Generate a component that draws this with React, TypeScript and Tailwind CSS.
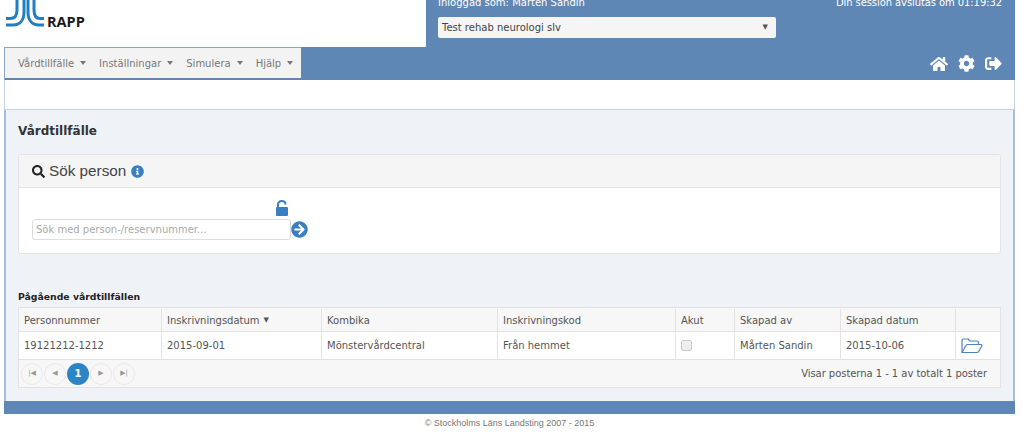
import React from 'react';
import { FaHome, FaCog, FaSignOutAlt, FaSearch, FaInfoCircle, FaArrowCircleRight } from 'react-icons/fa';

const navItems = ['Vårdtillfälle', 'Inställningar', 'Simulera', 'Hjälp'];

const columns = [
  { label: 'Personnummer', width: 'w-[143px]' },
  { label: 'Inskrivningsdatum', width: 'w-[160px]', sorted: true },
  { label: 'Kombika', width: 'w-[176px]' },
  { label: 'Inskrivningskod', width: 'w-[178px]' },
  { label: 'Akut', width: 'w-[59px]' },
  { label: 'Skapad av', width: 'w-[106px]' },
  { label: 'Skapad datum', width: 'w-[115px]' },
  { label: '', width: 'flex-1' },
];

const Caret = () => (
  <span className="ml-[6px] inline-block h-0 w-0 border-x-[3.5px] border-t-[4px] border-x-transparent border-t-[#777]" />
);

const PagerButton = ({ children }: { children: React.ReactNode }) => (
  <span className="flex h-[22px] w-[22px] items-center justify-center rounded-full border border-[#e9e9e9] bg-[#f7f7f7] text-[7px] text-[#999]">
    {children}
  </span>
);

const Logo = () => (
  <svg width="38" height="30" viewBox="0 0 38 30" className="ml-[2px] block" fill="none" stroke="#1f7fc1" strokeWidth="3">
    <path d="M11 -2 V10 C11 16 9 18.5 4 18.5 H0" />
    <path d="M18 -2 V12 C18 20 14 25 7 25 H0" />
    <path d="M22 -2 V12 C22 20 26 25 33 25 H38" />
    <path d="M28 -2 V10 C28 16 30 18.5 34 18.5 H38" />
  </svg>
);

const FolderIcon = () => (
  <svg width="22" height="16" viewBox="0 0 22 16" fill="none" stroke="#4f82bd" strokeWidth="1.2" strokeLinejoin="round">
    <path d="M1 14.5 V2.5 C1 1.5 1.5 1 2.5 1 H7 L9 3 H16 C17 3 17.5 3.5 17.5 4.5 V6.5" />
    <path d="M1 14.5 L5 7.5 C5.3 6.8 5.8 6.5 6.5 6.5 H20 C21 6.5 21.3 7.2 20.8 8 L17.5 13.8 C17.2 14.3 16.8 14.5 16 14.5 Z" />
  </svg>
);

const UnlockIcon = () => (
  <svg width="14" height="16" viewBox="0 0 14 16" className="absolute top-[12px] left-[256px]" fill="#3a7fc1">
    <rect x="1" y="7" width="12" height="9" rx="1" />
    <path d="M3 7 V4.5 C3 2.2 4.6 1 6.8 1 C9 1 10.5 2.2 10.5 4.5" fill="none" stroke="#3a7fc1" strokeWidth="2" />
  </svg>
);

export default function App() {
  return (
    <div className="h-[432px] w-[1023px] overflow-hidden bg-white font-['DejaVu_Sans',sans-serif] text-[10px] text-[#555]">
      <div className="mr-2 ml-1 h-[414px] w-[1011px]">
        {/* Header */}
        <div className="flex h-[47px]">
          <div className="flex w-[422px] items-start bg-white">
            <Logo />
            <span className="mt-[14px] ml-[3px] font-['Open_Sans',sans-serif] text-[14.5px] leading-[16px] font-bold text-[#1a1a1a]">
              RAPP
            </span>
          </div>
          <div className="flex-1 bg-[#5f87b6] pr-[13px] pl-[12px] text-[#fff]">
            <div className="mt-[-3px] flex justify-between text-[10px] leading-[12px]">
              <span>Inloggad som: Mårten Sandin</span>
              <span className="tracking-[-0.09px]">Din session avslutas om 01:19:32</span>
            </div>
            <div className="mt-[8px] flex h-[21px] w-[338px] items-center justify-between rounded-[2px] bg-[#f5f5f5] pr-[8px] pl-[4px] text-[#444]">
              <span>Test rehab neurologi slv</span>
              <span className="text-[7px] text-[#555]">▼</span>
            </div>
          </div>
        </div>

        {/* Nav */}
        <div className="flex h-[33px] items-stretch justify-between border-l border-[#8aa5c8] bg-[#5f87b6]">
          <div className="flex items-center gap-[13px] border-t border-b-2 border-t-[#8aa5c8] border-b-[#5f87b6] bg-[#f3f3f3] pr-[8px] pl-[13px] text-[#777]">
            {navItems.map((item) => (
              <span key={item} className="flex items-center">
                {item}
                <Caret />
              </span>
            ))}
          </div>
          <div className="flex items-center gap-[10px] pr-[13px] text-white">
            <FaHome size={18} />
            <FaCog size={17} />
            <FaSignOutAlt size={17} />
          </div>
        </div>

        {/* White band */}
        <div className="h-[30px] border-x border-b border-[#c5d3e4] bg-white" />

        {/* Main */}
        <div className="h-[291px] border-x-2 border-[#a9bcd5] bg-[#eff3f8] px-[12px]">
          <h1 className="pt-[14px] text-[12px] leading-[14px] font-bold text-[#333]">Vårdtillfälle</h1>

          <div className="mt-[16px] h-[100px] rounded-[3px] border border-[#e3e3e3] bg-white">
            <div className="flex h-[33px] items-center gap-[4px] border-b border-[#e3e3e3] bg-[#f5f5f5] pl-[13px] font-['Liberation_Sans',sans-serif] text-[15.3px] text-[#444]">
              <FaSearch size={13} className="text-[#222]" />
              <span>Sök person</span>
              <FaInfoCircle size={13} className="ml-[1px] text-[#3a7fc1]" />
            </div>
            <div className="relative pt-[31px] pl-[13px]">
              <UnlockIcon />
              <div className="flex items-center">
                <div className="flex h-[21px] w-[259px] items-center rounded-[3px] border border-[#ddd] pl-[3px] text-[#aaa]">
                  Sök med person-/reservnummer...
                </div>
                <FaArrowCircleRight size={17} className="text-[#3a7fc1]" />
              </div>
            </div>
          </div>

          <h2 className="mt-[37px] text-[9.3px] leading-[12px] font-bold text-[#222]">Pågående vårdtillfällen</h2>

          <div className="mt-[4px] border border-[#e2e2e2]">
            <div className="flex h-[24px] border-b border-[#e2e2e2] bg-[#f7f7f7] pt-[1px]">
              {columns.map((col) => (
                <div key={col.label} className={`${col.width} flex items-center border-r border-[#e2e2e2] pl-[5px] last:border-r-0`}>
                  {col.label}
                  {col.sorted && <span className="ml-[4px] text-[7px]">▼</span>}
                </div>
              ))}
            </div>
            <div className="flex h-[28px] border-b border-[#e2e2e2] bg-white">
              <div className="flex w-[143px] items-center border-r border-[#e2e2e2] pl-[5px]">19121212-1212</div>
              <div className="flex w-[160px] items-center border-r border-[#e2e2e2] pl-[5px]">2015-09-01</div>
              <div className="flex w-[176px] items-center border-r border-[#e2e2e2] pl-[5px]">Mönstervårdcentral</div>
              <div className="flex w-[178px] items-center border-r border-[#e2e2e2] pl-[5px]">Från hemmet</div>
              <div className="flex w-[59px] items-center border-r border-[#e2e2e2] pl-[5px]">
                <span className="h-[11px] w-[11px] rounded-[2px] border border-[#ccc] bg-[#eee]" />
              </div>
              <div className="flex w-[106px] items-center border-r border-[#e2e2e2] pl-[5px]">Mårten Sandin</div>
              <div className="flex w-[115px] items-center border-r border-[#e2e2e2] pl-[5px]">2015-10-06</div>
              <div className="flex flex-1 items-center pl-[5px]">
                <FolderIcon />
              </div>
            </div>
            <div className="flex h-[27px] items-center justify-between bg-[#f7f7f7] pr-[13px] pl-[2px]">
              <div className="flex items-center gap-[1px]">
                <PagerButton>|◀</PagerButton>
                <PagerButton>◀</PagerButton>
                <span className="flex h-[22px] w-[22px] items-center justify-center rounded-full bg-[#2a84c6] font-bold text-white">1</span>
                <PagerButton>▶</PagerButton>
                <PagerButton>▶|</PagerButton>
              </div>
              <span className="tracking-[-0.05px]">Visar posterna 1 - 1 av totalt 1 poster</span>
            </div>
          </div>
        </div>

        {/* Bottom bar */}
        <div className="h-[13px] bg-[#5f87b6]" />
      </div>
      <div className="mt-[4px] ml-1 w-[1011px] text-center font-['Liberation_Sans',sans-serif] text-[9px] leading-[10px] text-[#777]">
        © Stockholms Läns Landsting 2007 - 2015
      </div>
    </div>
  );
}
